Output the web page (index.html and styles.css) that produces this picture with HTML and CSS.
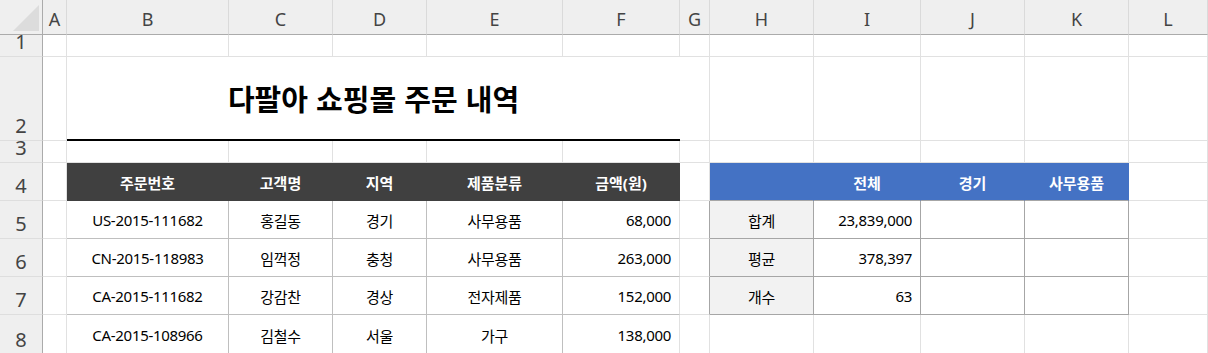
FILE: index.html
```html
<!DOCTYPE html>
<html lang="ko">
<head>
<meta charset="utf-8">
<title>다팔아 쇼핑몰 주문 내역</title>
<link rel="stylesheet" href="styles.css">
</head>
<body>
<div class="sheet">
  <!-- column header row -->
  <div class="corner"><span class="tri"></span></div>
  <div class="ch">A</div><div class="ch">B</div><div class="ch">C</div><div class="ch">D</div>
  <div class="ch">E</div><div class="ch">F</div><div class="ch">G</div><div class="ch">H</div>
  <div class="ch">I</div><div class="ch">J</div><div class="ch">K</div><div class="ch">L</div>

  <!-- row 1 -->
  <div class="rh">1</div>
  <div class="c"></div><div class="c"></div><div class="c"></div><div class="c"></div>
  <div class="c"></div><div class="c"></div><div class="c"></div><div class="c"></div>
  <div class="c"></div><div class="c"></div><div class="c"></div><div class="c"></div>

  <!-- row 2 -->
  <div class="rh">2</div>
  <div class="c"></div>
  <div class="c title">다팔아 쇼핑몰 주문 내역</div>
  <div class="c"></div><div class="c"></div><div class="c"></div>
  <div class="c"></div><div class="c"></div><div class="c"></div>

  <!-- row 3 -->
  <div class="rh">3</div>
  <div class="c"></div><div class="c"></div><div class="c"></div><div class="c"></div>
  <div class="c"></div><div class="c"></div><div class="c"></div><div class="c"></div>
  <div class="c"></div><div class="c"></div><div class="c"></div><div class="c"></div>

  <!-- row 4 -->
  <div class="rh">4</div>
  <div class="c"></div>
  <div class="c th">주문번호</div>
  <div class="c th">고객명</div>
  <div class="c th">지역</div>
  <div class="c th">제품분류</div>
  <div class="c th">금액(원)</div>
  <div class="c"></div>
  <div class="c bh"></div>
  <div class="c bh">전체</div>
  <div class="c bh">경기</div>
  <div class="c bh">사무용품</div>
  <div class="c"></div>

  <!-- row 5 -->
  <div class="rh">5</div>
  <div class="c"></div>
  <div class="c td">US-2015-111682</div>
  <div class="c td">홍길동</div>
  <div class="c td">경기</div>
  <div class="c td">사무용품</div>
  <div class="c td last num">68,000</div>
  <div class="c gap"></div>
  <div class="c st lab">합계</div>
  <div class="c st num">23,839,000</div>
  <div class="c st"></div>
  <div class="c st"></div>
  <div class="c"></div>

  <!-- row 6 -->
  <div class="rh">6</div>
  <div class="c"></div>
  <div class="c td">CN-2015-118983</div>
  <div class="c td">임꺽정</div>
  <div class="c td">충청</div>
  <div class="c td">사무용품</div>
  <div class="c td last num">263,000</div>
  <div class="c gap"></div>
  <div class="c st lab">평균</div>
  <div class="c st num">378,397</div>
  <div class="c st"></div>
  <div class="c st"></div>
  <div class="c"></div>

  <!-- row 7 -->
  <div class="rh">7</div>
  <div class="c"></div>
  <div class="c td">CA-2015-111682</div>
  <div class="c td">강감찬</div>
  <div class="c td">경상</div>
  <div class="c td">전자제품</div>
  <div class="c td last num">152,000</div>
  <div class="c gap"></div>
  <div class="c st lab">개수</div>
  <div class="c st num">63</div>
  <div class="c st"></div>
  <div class="c st"></div>
  <div class="c"></div>

  <!-- row 8 -->
  <div class="rh">8</div>
  <div class="c"></div>
  <div class="c td">CA-2015-108966</div>
  <div class="c td">김철수</div>
  <div class="c td">서울</div>
  <div class="c td">가구</div>
  <div class="c td last num">138,000</div>
  <div class="c"></div>
  <div class="c"></div>
  <div class="c"></div>
  <div class="c"></div>
  <div class="c"></div>
  <div class="c"></div>
</div>
</body>
</html>
```

FILE: styles.css
```css
* { box-sizing: border-box; }

html, body {
  margin: 0;
  padding: 0;
  background: #ffffff;
  overflow: hidden;
}

body {
  font-family: "Noto Sans", "Noto Sans CJK KR", sans-serif;
  color: #000;
}

.sheet {
  display: grid;
  grid-template-columns: 43px 24px 162px 104px 94px 136px 117px 30px 104px 107px 104px 104px 79px;
  grid-template-rows: 35px 22px 84px 22px 38px 38px 38px 38px 40px;
  width: 1208px;
  height: 353px;
  overflow: hidden;
}

/* headers */
.corner {
  background: #efefef;
  border-right: 1px solid #ababab;
  border-bottom: 1px solid #ababab;
  position: relative;
}
.tri {
  position: absolute;
  left: 13px;
  top: 5px;
  width: 26px;
  height: 26px;
  background: #dcdcdc;
  clip-path: polygon(100% 0, 100% 100%, 0 100%);
}

.ch {
  background: #efefef;
  border-right: 1px solid #dadada;
  border-bottom: 1px solid #ababab;
  display: flex;
  align-items: center;
  justify-content: center;
  padding-top: 3px;
  font-size: 18px;
  color: #444;
}

.rh {
  background: #efefef;
  border-right: 1px solid #ababab;
  border-bottom: 1px solid #dedede;
  display: flex;
  align-items: flex-end;
  justify-content: center;
  padding-bottom: 6px;
  font-size: 20px;
  line-height: 16px;
  color: #444;
  overflow: hidden;
}

/* cells */
.c {
  border-right: 1px solid #e1e1e1;
  border-bottom: 1px solid #e1e1e1;
  display: flex;
  align-items: center;
  justify-content: center;
  font-size: 15px;
  letter-spacing: -0.3px;
  padding-top: 1px;
  white-space: nowrap;
  overflow: hidden;
}

.title {
  grid-column: span 5;
  border-right: none;
  border-bottom: 2px solid #000;
  font-family: "Noto Sans CJK KR", sans-serif;
  font-weight: 700;
  font-size: 29px;
  letter-spacing: 0;
  padding-top: 0;
}

.th {
  background: #404040;
  border-right-color: #404040;
  border-bottom-color: #404040;
  color: #fff;
  font-weight: 700;
  letter-spacing: 0;
}

.bh {
  background: #4472c4;
  border-right-color: #4472c4;
  border-bottom-color: #a6a6a6;
  color: #fff;
  font-weight: 700;
  letter-spacing: 0;
}

.td {
  border-right-color: #bfbfbf;
  border-bottom-color: #bfbfbf;
}
.td.last {
  border-right-color: #e1e1e1;
}

.num {
  justify-content: flex-end;
  padding-right: 8px;
}

.gap {
  border-right-color: #a6a6a6;
}

.st {
  border-right-color: #a6a6a6;
  border-bottom-color: #a6a6a6;
}
.lab {
  background: #f2f2f2;
}
```
